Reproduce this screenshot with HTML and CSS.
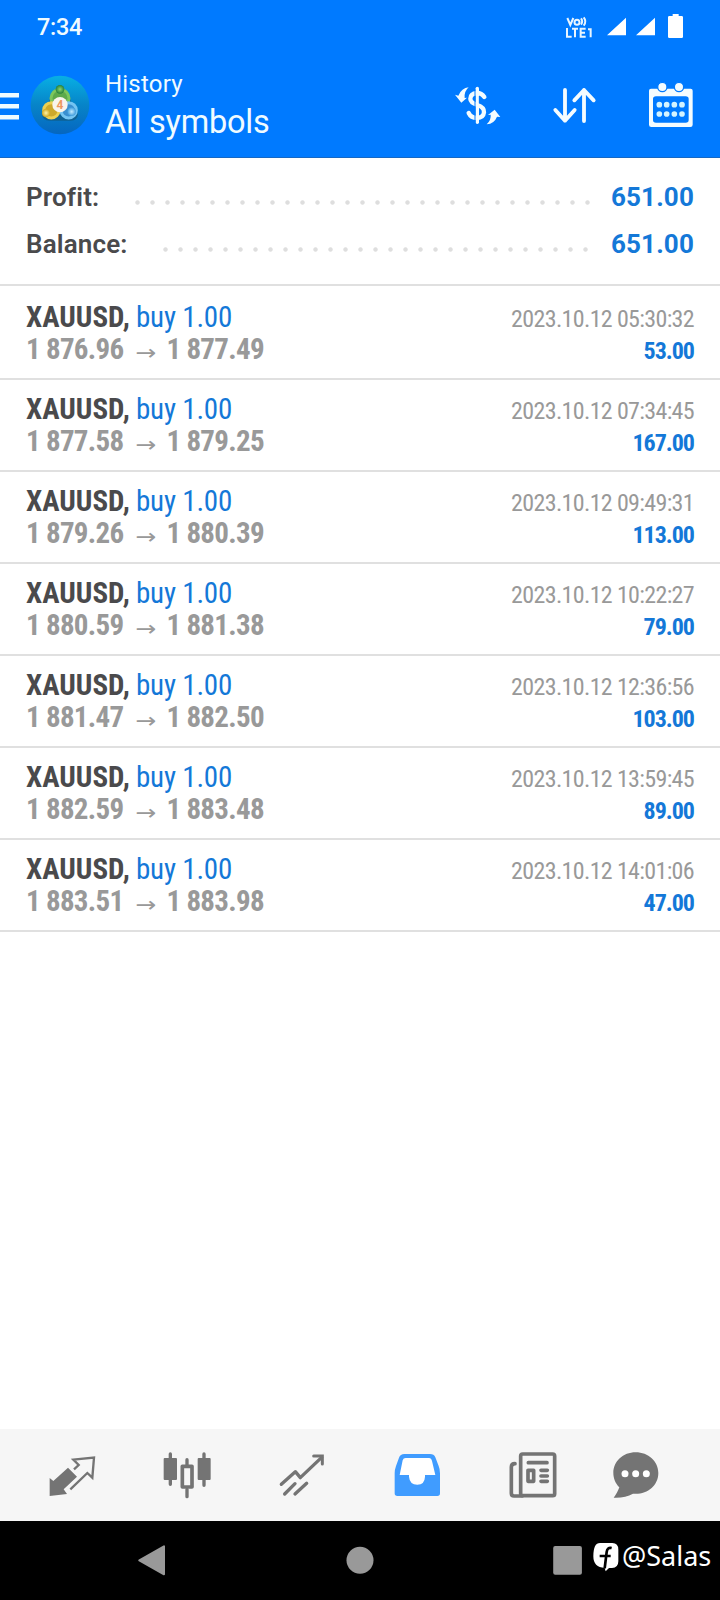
FILE: index.html
```html
<!DOCTYPE html>
<html lang="en">
<head>
<meta charset="utf-8">
<title>History</title>
<link rel="stylesheet" href="styles.css">
</head>
<body>
<div class="screen">
  <header class="top">
    <div class="status">
      <span class="clock">7:34</span>
      <svg class="status-icons" width="123" height="30" viewBox="402 30 369 90" fill="#fff">
        <g fill="none" stroke="#e8f5ff" stroke-width="6">
          <path d="M412 54l9 21 9-21M461 52q10 12 0 25M453 55q7 9 0 19"/>
          <circle cx="441" cy="67" r="7.500"/>
          <path d="M411 84v26h14M426 86h18M435 86v26M467 86h-15v24h15M452 98h13M474 88h8v24"/>
        </g>
        <path d="M588 53v53h-57zM675 53v53h-57zM728 42h18v6h9q4 0 4 4v58q0 4-4 4h-37q-4 0-4-4V52q0-4 4-4h10z"/>
      </svg>
    </div>
    <div class="toolbar">
      <svg class="menu" width="19" height="30" viewBox="0 0 19 30" fill="#f0fbff"><path d="M0 1h19v4.500H0zM0 12h19v4.500H0zM0 23h19v4.500H0z"/></svg>
      <svg class="logo" width="60" height="60" viewBox="0 0 180 180">
        <defs>
          <linearGradient id="sea" x2="0" y2="1"><stop stop-color="#08b0e4"/><stop offset=".5" stop-color="#0784c8"/><stop offset="1" stop-color="#0566c0"/></linearGradient>
          <radialGradient id="green"><stop stop-color="#8ed66b"/><stop offset="1" stop-color="#25803d"/></radialGradient>
          <radialGradient id="gold"><stop stop-color="#fff6a8"/><stop offset="1" stop-color="#d0a822"/></radialGradient>
          <radialGradient id="blue"><stop stop-color="#c4ecff"/><stop offset="1" stop-color="#3d9bdc"/></radialGradient>
        </defs>
        <circle cx="90" cy="90" r="88" fill="url(#sea)"/>
        <path d="M36 118L72 50q18-22 36 0l36 68q-2 20-24 19H59q-22 0-23-19z" fill="#174d63" opacity=".5"/>
        <circle cx="90" cy="70" r="27" fill="#5da94c" stroke="#7cc65c" stroke-width="9"/>
        <circle cx="64" cy="106" r="23" fill="#cda92b" stroke="#ecd052" stroke-width="9"/>
        <circle cx="116" cy="106" r="23" fill="#3a8fd0" stroke="#74c4f2" stroke-width="9"/>
        <circle cx="90" cy="43" r="13" fill="url(#green)"/>
        <circle cx="48" cy="114" r="12" fill="url(#gold)"/>
        <circle cx="125" cy="110" r="13" fill="url(#blue)"/>
        <circle cx="90" cy="89" r="23" fill="#f8f4ec"/>
        <text class="logo-num" x="90" y="102" text-anchor="middle">4</text>
      </svg>
      <div class="titles"><div class="title">History</div><div class="subtitle">All symbols</div></div>
      <div class="actions">
        <svg width="50" height="50" viewBox="69 240 150 150">
          <g fill="none" stroke="#f4fcff" stroke-width="13" stroke-linecap="round">
            <path d="M142 265v102" stroke-width="10"/>
            <path d="M163 291q-8-12-22-12-20 2-20 17 0 12 22 19 20 7 19 22-2 17-21 17-18 0-25-15"/>
          </g>
          <path d="M135 272v102M148 288v22" stroke="#007aff" stroke-width="3"/>
          <path d="M116 262q-14 12-12 32l7-1-17 15-19-24 10 3q10-23 31-25zM170 373q14-14 12-29l-8 1 20-16 17 22-10-1q-8 21-31 23z" fill="#f4fcff"/>
        </svg>
        <svg width="50" height="50" viewBox="360 240 150 150" fill="none" stroke="#f4fcff" stroke-width="11.500" stroke-linecap="round" stroke-linejoin="round">
          <path d="M405 270v92M376 330l29 32 29-32M462 363v-93M433 301l29-31 29 31"/>
        </svg>
        <svg width="50" height="50" viewBox="651 240 150 150">
          <path fill="#f4fcff" fill-rule="evenodd" d="M663 266h119q6 0 6 6v102q0 7-7 7H664q-7 0-7-7V272q0-6 6-6zm15 23q-9 0-9 8v63q0 8 9 8h89q9 0 9-8v-63q0-8-9-8z"/>
          <g fill="#f4fcff" stroke="#007aff" stroke-width="4"><circle cx="697" cy="261" r="14"/><circle cx="747" cy="261" r="14"/></g>
          <g fill="#d4f4ff"><circle cx="688" cy="314" r="8.500"/><circle cx="710" cy="314" r="8.500"/><circle cx="733" cy="314" r="8.500"/><circle cx="756" cy="314" r="8.500"/><circle cx="688" cy="342" r="8.500"/><circle cx="710" cy="342" r="8.500"/><circle cx="733" cy="342" r="8.500"/><circle cx="756" cy="342" r="8.500"/></g>
        </svg>
      </div>
    </div>
  </header>

  <section class="summary">
    <div class="sum"><span class="label">Profit:</span><i class="dots dots-profit"></i><span class="total">651.00</span></div>
    <div class="sum"><span class="label">Balance:</span><i class="dots dots-balance"></i><span class="total">651.00</span></div>
  </section>

  <main class="deals">
    <div class="deal"><div class="line"><span class="sym">XAUUSD, <span class="side">buy 1.00</span></span><span class="date">2023.10.12 05:30:32</span></div><div class="line"><span class="prices">1 876.96<i class="arrow">→</i>1 877.49</span><span class="amount">53.00</span></div></div>
    <div class="deal"><div class="line"><span class="sym">XAUUSD, <span class="side">buy 1.00</span></span><span class="date">2023.10.12 07:34:45</span></div><div class="line"><span class="prices">1 877.58<i class="arrow">→</i>1 879.25</span><span class="amount">167.00</span></div></div>
    <div class="deal"><div class="line"><span class="sym">XAUUSD, <span class="side">buy 1.00</span></span><span class="date">2023.10.12 09:49:31</span></div><div class="line"><span class="prices">1 879.26<i class="arrow">→</i>1 880.39</span><span class="amount">113.00</span></div></div>
    <div class="deal"><div class="line"><span class="sym">XAUUSD, <span class="side">buy 1.00</span></span><span class="date">2023.10.12 10:22:27</span></div><div class="line"><span class="prices">1 880.59<i class="arrow">→</i>1 881.38</span><span class="amount">79.00</span></div></div>
    <div class="deal"><div class="line"><span class="sym">XAUUSD, <span class="side">buy 1.00</span></span><span class="date">2023.10.12 12:36:56</span></div><div class="line"><span class="prices">1 881.47<i class="arrow">→</i>1 882.50</span><span class="amount">103.00</span></div></div>
    <div class="deal"><div class="line"><span class="sym">XAUUSD, <span class="side">buy 1.00</span></span><span class="date">2023.10.12 13:59:45</span></div><div class="line"><span class="prices">1 882.59<i class="arrow">→</i>1 883.48</span><span class="amount">89.00</span></div></div>
    <div class="deal"><div class="line"><span class="sym">XAUUSD, <span class="side">buy 1.00</span></span><span class="date">2023.10.12 14:01:06</span></div><div class="line"><span class="prices">1 883.51<i class="arrow">→</i>1 883.98</span><span class="amount">47.00</span></div></div>
  </main>

  <nav class="tabs">
    <svg width="60" height="60" viewBox="127 72 180 180">
      <path fill="#747474" d="M205 140l27 27-40 38 10 14-52 6v-54l11 9z"/>
      <path fill="none" stroke="#747474" stroke-width="7" d="M223 145l14-13-16-16 62-6-5 60-15-14-51 49"/>
    </svg>
    <svg width="60" height="60" viewBox="472 72 180 180" fill="#747474" stroke="#747474" stroke-linecap="round" stroke-linejoin="round">
      <path stroke-width="10" d="M512 99v91M613 99v94M562 116v16M562 205v22"/>
      <path stroke-width="6" d="M495 114h34v60h-34zM597 114h33v60h-33z"/>
      <path stroke-width="11" fill="#f6f6f6" d="M548 136h29v62h-29z"/>
    </svg>
    <svg width="60" height="60" viewBox="817 72 180 180" fill="none" stroke="#747474" stroke-width="10" stroke-linecap="round" stroke-linejoin="round">
      <path d="M845 190l42-38 15 18 64-61M855 219l31-31M886 219l35-32"/><path stroke-width="9" stroke-linejoin="miter" d="M942 105h26v24"/>
    </svg>
    <svg width="60" height="60" viewBox="82 72 180 180">
      <path fill="#409cff" d="M134 99h77q12 0 16 10l10 26q4 9 4 22v60q0 8-8 8H113q-8 0-8-8v-60q0-11 4-22l9-25q4-11 16-11z"/>
      <path fill="#fff" d="M138 111h70q7 0 9 9l10 42h-31v5q-1 24-23 24-23 0-25-24v-5h-28l9-44q2-7 9-7z"/>
    </svg>
    <svg width="60" height="60" viewBox="427 72 180 180" fill="none" stroke="#747474" stroke-width="11" stroke-linecap="round" stroke-linejoin="round">
      <rect x="483" y="99" width="102" height="125" rx="6"/>
      <path d="M466 128q-11 0-11 10v79q0 8 8 8h25M506 125h56M544 148h19M544 165h19M544 181h19"/><rect x="505" y="148" width="17" height="33"/>
    </svg>
    <svg class="tab-chat" width="60" height="60" viewBox="739 72 180 180">
      <path fill="#747474" d="M828 94c38 0 68 27 68 62 0 39-35 66-76 62-16 9-35 13-58 12 7-9 13-20 17-31-11-11-18-26-18-43 0-35 29-62 67-62z"/>
      <g fill="#fff"><circle cx="796" cy="158" r="10.500"/><circle cx="828" cy="158" r="10.500"/><circle cx="860" cy="158" r="10.500"/></g>
    </svg>
  </nav>

  <footer class="sysnav">
    <svg width="30" height="32" viewBox="411 376 90 96"><path fill="#999" stroke="#999" stroke-width="6" stroke-linejoin="round" d="M418 422l74-42v84z"/></svg>
    <svg width="30" height="32" viewBox="0 0 30 32"><circle cx="15" cy="15.300" r="13.500" fill="#999"/></svg>
    <svg width="30" height="32" viewBox="0 0 30 32"><rect x=".2" y="1" width="28.700" height="28.700" rx="2" fill="#999"/></svg>
    <div class="handle">
      <svg width="26" height="30" viewBox="699 369 78 90">
        <path fill="#fff" d="M720 372h37q18 0 18 20v35q0 19-19 20h-9l-10 10-3-10q-34-2-34-35 0-40 20-40z"/>
        <path fill="none" stroke="#000" stroke-width="8" d="M755 387q-13-3-15 12l-6 49M719 411h33"/>
      </svg>
      <span class="handle-name">@Salas</span>
    </div>
  </footer>
</div>
</body>
</html>
```
FILE: styles.css
```css
* { box-sizing: border-box; }
body { margin: 0; background: #fff; font-family: Roboto, "Liberation Sans", sans-serif; }
svg { display: block; flex: none; }
.screen { width: 720px; height: 1600px; display: flex; flex-direction: column; overflow: hidden; }

.top { height: 158px; background: #007aff; border-bottom: 1px solid #1668c4; color: #f0fbff; flex: none; }
.status { height: 54px; display: flex; justify-content: space-between; padding: 10px 33px 0 37px; }
.clock { font-size: 23.500px; line-height: 34px; font-weight: 500; letter-spacing: -.3px; }
.toolbar { height: 102px; display: flex; align-items: center; }
.menu { margin-top: 3px; }
.logo { margin-left: 11px; }
.logo-num { font: bold 36px Roboto, sans-serif; fill: #ed985f; }
.titles { margin: 4px 0 0 15px; white-space: nowrap; }
.title { font-size: 24px; line-height: 31px; letter-spacing: .2px; }
.subtitle { font-size: 32.500px; line-height: 45px; letter-spacing: -.25px; }
.actions { display: flex; gap: 47px; margin: 0 23px 0 auto; }

.summary { height: 128px; padding: 15px 26px 0; border-bottom: 2px solid #e0e0e0; flex: none; }
.sum { height: 47px; display: flex; align-items: center; font-size: 26px; font-weight: 700; color: #4a4a4c; }
.label { font-weight: 600; letter-spacing: .15px; }
.total { color: #1478d8; letter-spacing: .15px; }
.dots { height: 5px; margin: 11px 16px 0 auto; background: radial-gradient(circle at 7.500px 2.500px, #dedede 1.800px, transparent 2.600px) 0 0 / 15px 5px; }
.dots-profit { width: 465px; }
.dots-balance { width: 435px; margin-right: 18px; }

.deals { padding-top: 2px; flex: 1; font-stretch: 75%; font-family: "Roboto Condensed", Roboto, sans-serif; }
.deal { height: 92px; padding: 13px 26px 0; border-bottom: 2px solid #e0e0e0; }
.line { height: 32px; display: flex; justify-content: space-between; line-height: 32px; white-space: nowrap; }
.sym, .prices { font-size: 29px; font-weight: 700; }
.sym { color: #4a4a4c; }
.side { color: #1478d8; font-weight: 400; letter-spacing: -.2px; margin-left: -.5px; }
.prices { color: #999; letter-spacing: -.7px; }
.arrow { display: inline-block; width: 43px; padding-left: 2px; text-align: center; font: 400 25px/20px "DejaVu Sans", sans-serif; letter-spacing: 0; transform: translateY(2px) scaleY(.85); }
.date { font-size: 24px; color: #999; padding-top: 2px; letter-spacing: -.65px; }
.amount { font-size: 24px; font-weight: 700; color: #1478d8; padding-top: 2px; letter-spacing: -1px; }

.tabs { height: 92px; flex: none; display: flex; align-items: center; gap: 55px; padding: 0 0 1px 42px; background: #f6f6f6; }
.tab-chat { margin-left: -11px; }
.sysnav { position: relative; height: 79px; flex: none; display: flex; gap: 178px; padding: 24px 0 0 137px; background: #000; }
.handle { position: absolute; left: 593px; top: 21px; display: flex; color: #fff; }
.handle-name { margin-left: 3px; font: 27px/28px "Noto Sans", sans-serif; }
```
